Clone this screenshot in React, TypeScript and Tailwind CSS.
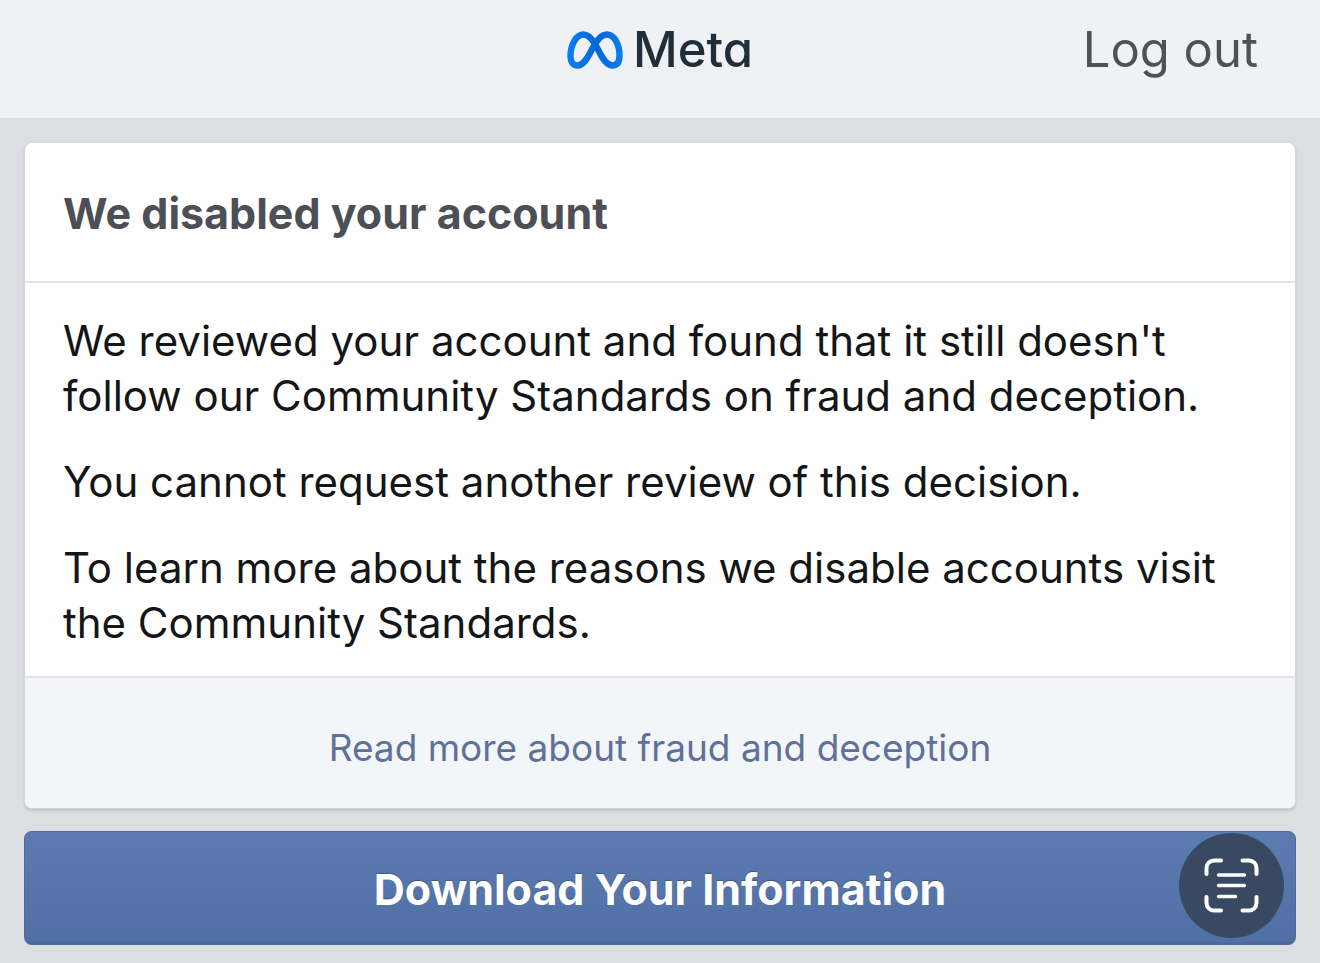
function MetaMark() {
  return (
    <svg viewBox="0 0 56 38" className="h-[38px] w-14" fill="none" aria-hidden="true">
      <defs>
        <linearGradient id="mark" x1="0" y1="38" x2="56" y2="38" gradientUnits="userSpaceOnUse">
          <stop offset="0" stopColor="#0a80f5" />
          <stop offset="0.3" stopColor="#0872e4" />
          <stop offset="0.55" stopColor="#0667d6" />
          <stop offset="1" stopColor="#0a7df2" />
        </linearGradient>
      </defs>
      <path
        d="M3.5 25.5C3.5 13 9.5 3.5 16.5 3.5C21.5 3.5 24.6 7.4 28 13C32.5 20.5 37.5 34.5 45.3 34.5C50 34.5 52.5 31 52.5 24.5C52.5 13 47 3.5 39.8 3.5C34.5 3.5 31 8 28 13C23 21 18.5 34.5 10.5 34.5C6 34.5 3.5 31 3.5 25.5Z"
        stroke="url(#mark)"
        strokeWidth="6.4"
        strokeLinejoin="round"
      />
    </svg>
  );
}

function ScanTextIcon() {
  return (
    <svg
      viewBox="0 0 56 56"
      className="size-14"
      fill="none"
      stroke="white"
      strokeWidth="4"
      strokeLinecap="round"
      aria-hidden="true"
    >
      <path d="M2.5 16V10a7.500 7.500 0 0 1 7.500-7.500H17" />
      <path d="M38.500 2.500h6.500a7.500 7.500 0 0 1 7.500 7.500V16" />
      <path d="M52.500 39v6a7.500 7.500 0 0 1-7.500 7.500H38.500" />
      <path d="M17 52.500H10a7.500 7.500 0 0 1-7.500-7.500V39" />
      <path d="M14.500 17H40.500M14.500 27.500H40.500M14.500 38.500H31.500" strokeWidth="3.4" />
    </svg>
  );
}

export default function App() {
  return (
    <div className="min-h-screen bg-[#dddee2] font-['Inter',sans-serif]">
      <header className="grid h-[118px] grid-cols-3 items-start bg-[#f0f1f5] px-[62px] pt-5">
        <div />
        <div className="flex h-15 items-center justify-center gap-2.5">
          <MetaMark />
          <span className="text-[49px] leading-15 font-medium text-[#1f2e38] [font-feature-settings:'cv11']">
            Meta
          </span>
        </div>
        <a href="#logout" className="justify-self-end text-[49px] leading-15 text-[#4e5157]">
          Log out
        </a>
      </header>

      <main className="flex flex-col gap-[22px] px-6 pt-6 pb-[18px]">
        <section className="overflow-hidden rounded-lg border border-[#d3d5d9] bg-white shadow-[0_2px_3px_rgba(0,0,0,0.12)]">
          <h1 className="border-b-2 border-[#e2e3e6] px-[38px] pt-[43px] pb-10 text-[43px] leading-[55px] font-bold text-[#4c4f56]">
            We disabled your account
          </h1>
          <div className="flex flex-col gap-[31px] px-[38px] pt-[30px] pb-[26px] text-[42px] leading-[55px] text-[#141517]">
            <p>
              We reviewed your account and found that it still doesn't follow our Community Standards
              on fraud and deception.
            </p>
            <p>You cannot request another review of this decision.</p>
            <p>
              To learn more about the reasons we disable accounts visit the Community Standards.
            </p>
          </div>
          <div className="flex justify-center border-t-2 border-[#e2e3e6] bg-[#f3f6f8] pt-[42px] pb-8">
            <a href="#fraud" className="text-[37px] leading-14 text-[#5f719b]">
              Read more about fraud and deception
            </a>
          </div>
        </section>

        <div className="relative">
          <button
            type="button"
            className="h-[114px] w-full rounded-lg border border-b-3 border-[#50699c] bg-linear-to-b from-[#5b7bb1] to-[#506fa5] pt-1 text-[43px] font-bold text-white [text-shadow:0_-1px_1px_rgba(0,0,0,0.25)]"
          >
            Download Your Information
          </button>
          <button
            type="button"
            aria-label="Scan text"
            className="absolute top-0.5 right-3 flex size-[105px] items-center justify-center rounded-full bg-[#394961]"
          >
            <ScanTextIcon />
          </button>
        </div>
      </main>
    </div>
  );
}
